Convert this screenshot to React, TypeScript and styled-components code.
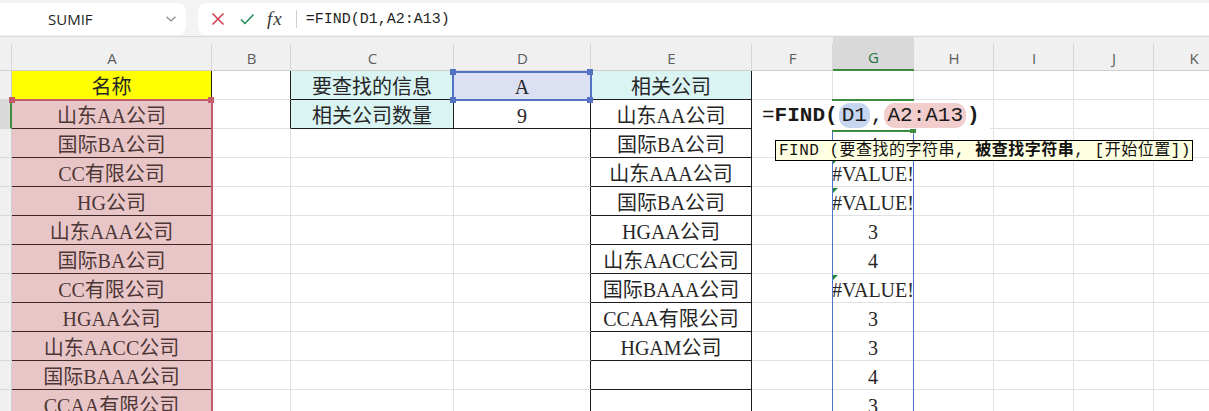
import React from "react";
import styled, { createGlobalStyle } from "styled-components";

const GlobalStyle = createGlobalStyle`
  html, body {
    margin: 0;
    background: #ffffff;
    overflow: hidden;
  }
`;

const COL_WIDTHS = [12, 200, 79, 163, 137, 161, 81, 81, 80, 80, 80, 80];
const LETTERS = ["", "A", "B", "C", "D", "E", "F", "G", "H", "I", "J", "K"];
const ROW_H = 29;
const HEAD_H = 34;

const colA = [
  "名称",
  "山东AA公司",
  "国际BA公司",
  "CC有限公司",
  "HG公司",
  "山东AAA公司",
  "国际BA公司",
  "CC有限公司",
  "HGAA公司",
  "山东AACC公司",
  "国际BAAA公司",
  "CCAA有限公司",
];
const colC = ["要查找的信息", "相关公司数量"];
const colD = ["A", "9"];
const colE = [
  "相关公司",
  "山东AA公司",
  "国际BA公司",
  "山东AAA公司",
  "国际BA公司",
  "HGAA公司",
  "山东AACC公司",
  "国际BAAA公司",
  "CCAA有限公司",
  "HGAM公司",
  "",
  "",
];
const colG = ["", "", "4", "#VALUE!", "#VALUE!", "3", "4", "#VALUE!", "3", "3", "4", "3"];

const GRID = "#e1e1e1";
const BLACK = "#1c1c1c";
const TINT_LINE = "#3e2626";
const GREEN = "#3d8b3d";

const isBoxed = (r: number, c: number) =>
  c === 1 || c === 5 || ((c === 3 || c === 4) && r <= 2);

const cellText = (r: number, c: number) => {
  if (c === 1) return colA[r - 1] ?? "";
  if (c === 3) return colC[r - 1] ?? "";
  if (c === 4) return colD[r - 1] ?? "";
  if (c === 5) return colE[r - 1] ?? "";
  if (c === 7) return colG[r - 1] ?? "";
  return "";
};

const cellBg = (r: number, c: number) => {
  if (c === 1) return r === 1 ? "#ffff00" : "#e8c6c7";
  if ((c === 3 && r <= 2) || (c === 5 && r === 1)) return "#daf3f3";
  if (c === 4 && r === 1) return "#dbe0f3";
  return "#ffffff";
};

const Page = styled.div`
  width: 1209px;
  height: 411px;
  overflow: hidden;
  font-family: "Liberation Serif", "Noto Sans CJK SC", serif;
`;

const TopBar = styled.div`
  height: 37px;
  box-sizing: border-box;
  background: #f3f3f3;
  border-bottom: 1px solid #d9d9d9;
  display: flex;
  align-items: flex-start;
  padding-top: 3px;
  gap: 12px;
`;

const NameBox = styled.div`
  margin-left: -10px;
  width: 196px;
  height: 32px;
  box-sizing: border-box;
  background: #ffffff;
  border-radius: 8px;
  display: flex;
  align-items: center;
  padding: 0 9px 0 58px;
  font-family: "Open Sans", "Noto Sans", sans-serif;
  font-size: 15px;
  color: #1f1f1f;
`;

const NameText = styled.span`
  flex: 1;
`;

const FormulaBox = styled.div`
  flex: 1;
  margin-right: -12px;
  height: 32px;
  box-sizing: border-box;
  background: #ffffff;
  border-radius: 8px;
  display: flex;
  align-items: center;
  padding-left: 13px;
`;

const IconSlot = styled.span`
  display: inline-flex;
  width: 14px;
  height: 14px;
  margin-right: 15px;
`;

const Fx = styled.span`
  font-family: "Liberation Serif", serif;
  font-style: italic;
  font-size: 19px;
  color: #3a3a3a;
  letter-spacing: 1px;
  margin-left: -2px;
`;

const Divider = styled.span`
  width: 1px;
  height: 18px;
  background: #d0d0d0;
  margin: 0 9px 0 13px;
`;

const FormulaText = styled.span`
  font-family: "Liberation Mono", monospace;
  font-size: 15px;
  color: #1f1f1f;
`;

const Sheet = styled.div`
  position: relative;
  width: 1234px;
  display: grid;
  grid-template-columns: ${COL_WIDTHS.map((w) => `${w}px`).join(" ")};
  grid-auto-rows: ${ROW_H}px;
  grid-template-rows: ${HEAD_H}px;
`;

const HeadCell = styled.div<{ $active?: boolean }>`
  position: relative;
  box-sizing: border-box;
  background: ${(p) => (p.$active ? "#d9d9d9" : "#f0f0f0")};
  border-bottom: ${(p) => (p.$active ? `2px solid ${GREEN}` : "1px solid #cfcfcf")};
  display: flex;
  align-items: center;
  justify-content: center;
  padding-top: 8px;
  font-family: "Open Sans", "Noto Sans", sans-serif;
  font-size: 15px;
  color: ${(p) => (p.$active ? "#1f7340" : "#5c5c5c")};

  &::after {
    content: "";
    position: absolute;
    right: 0;
    top: 7px;
    bottom: 0;
    width: 1px;
    background: #d6d6d6;
  }
`;

const RowHead = styled.div<{ $active?: boolean }>`
  box-sizing: border-box;
  background: ${(p) => (p.$active ? "#d9d9d9" : "#f0f0f0")};
  border-bottom: 1px solid #d9d9d9;
  border-right: ${(p) => (p.$active ? `2px solid ${GREEN}` : "1px solid #cfcfcf")};
`;

const Cell = styled.div<{ $bg: string; $right: string; $bottom: string; $color: string }>`
  box-sizing: border-box;
  background: ${(p) => p.$bg};
  border-right: 1px solid ${(p) => p.$right};
  border-bottom: 1px solid ${(p) => p.$bottom};
  color: ${(p) => p.$color};
  display: flex;
  align-items: center;
  justify-content: center;
  padding-top: 3px;
  overflow: hidden;
  white-space: nowrap;
  font-size: 20px;
  line-height: 1;
`;

const RefBox = styled.div<{ $x: number; $y: number; $w: number; $h: number }>`
  position: absolute;
  left: ${(p) => p.$x}px;
  top: ${(p) => p.$y}px;
  width: ${(p) => p.$w}px;
  height: ${(p) => p.$h}px;
  box-sizing: border-box;
  pointer-events: none;
`;

const D1Box = styled(RefBox)`
  border: 2px solid #5472c4;
`;

const RangeBox = styled(RefBox)`
  border-top: 2px solid #c25b6b;
  border-right: 2px solid #c25b6b;
`;

const ActiveBox = styled(RefBox)`
  border-top: 2px solid ${GREEN};
  border-bottom: 2px solid ${GREEN};
`;

const SpillBox = styled(RefBox)`
  border-left: 1px solid #4f73cc;
  border-right: 1px solid #4f73cc;
`;

const Handle = styled.div<{ $x: number; $y: number; $c: string }>`
  position: absolute;
  left: ${(p) => p.$x - 3}px;
  top: ${(p) => p.$y - 3}px;
  width: 6px;
  height: 6px;
  background: ${(p) => p.$c};
`;

const ErrorMark = styled.div<{ $y: number }>`
  position: absolute;
  left: 833px;
  top: ${(p) => p.$y}px;
  width: 0;
  height: 0;
  border-top: 5px solid #1e8a3c;
  border-right: 5px solid transparent;
`;

const Editor = styled.div`
  position: absolute;
  left: 752px;
  top: 64px;
  width: 238px;
  height: 28px;
  background: #ffffff;
  display: flex;
  align-items: center;
  padding-left: 10px;
  box-sizing: border-box;
  font-family: "Liberation Mono", monospace;
  font-size: 21px;
  color: #1a1a1a;
  white-space: pre;
`;

const Strong = styled.span`
  font-weight: bold;
`;

const RefChip = styled.span<{ $bg: string }>`
  background: ${(p) => p.$bg};
  border-radius: 11px;
  padding: 1px 3px;
  margin: 0 1px;
`;

const Tooltip = styled.div`
  position: absolute;
  left: 775px;
  top: 103px;
  width: 418px;
  height: 21px;
  box-sizing: border-box;
  background: #ffffe1;
  border: 1px solid #000000;
  display: flex;
  align-items: center;
  padding-left: 3px;
  font-family: "Liberation Mono", "Noto Sans CJK SC", monospace;
  font-size: 16px;
  letter-spacing: 0.5px;
  line-height: 1;
  color: #111111;
  white-space: pre;
  overflow: hidden;
`;

const rowTop = (r: number) => HEAD_H + (r - 1) * ROW_H;

export default function App() {
  const rows = Array.from({ length: 12 }, (_, i) => i + 1);

  return (
    <Page>
      <GlobalStyle />
      <TopBar>
        <NameBox>
          <NameText>SUMIF</NameText>
          <svg width="12" height="8" viewBox="0 0 12 8">
            <path d="M1.5 1.8 L6 6 L10.5 1.8" fill="none" stroke="#8a8a8a" strokeWidth="1.2" />
          </svg>
        </NameBox>
        <FormulaBox>
          <IconSlot>
            <svg width="14" height="14" viewBox="0 0 14 14">
              <path d="M1.5 1.5 L12.5 12.5 M12.5 1.5 L1.5 12.5" stroke="#d13c4b" strokeWidth="1.5" />
            </svg>
          </IconSlot>
          <IconSlot>
            <svg width="14" height="14" viewBox="0 0 14 14">
              <path d="M1 7.5 L5 11.5 L13.5 2.5" fill="none" stroke="#1b8a57" strokeWidth="1.5" />
            </svg>
          </IconSlot>
          <Fx>fx</Fx>
          <Divider />
          <FormulaText>=FIND(D1,A2:A13)</FormulaText>
        </FormulaBox>
      </TopBar>

      <Sheet>
        {LETTERS.map((l, c) => (
          <HeadCell key={`h${c}`} $active={l === "G"}>
            {l}
          </HeadCell>
        ))}
        {rows.map((r) =>
          COL_WIDTHS.map((_, c) => {
            if (c === 0) return <RowHead key={`${r}-0`} $active={r === 2} />;
            const tinted = c === 1 && r > 1;
            const right =
              isBoxed(r, c) || isBoxed(r, c + 1) ? (tinted ? TINT_LINE : BLACK) : GRID;
            const bottom =
              isBoxed(r, c) || isBoxed(r + 1, c) ? (tinted ? TINT_LINE : BLACK) : GRID;
            return (
              <Cell
                key={`${r}-${c}`}
                $bg={cellBg(r, c)}
                $right={right}
                $bottom={bottom}
                $color={tinted ? "#4d3636" : "#262626"}
              >
                {cellText(r, c)}
              </Cell>
            );
          })
        )}

        <RangeBox $x={11} $y={62} $w={202} $h={400} />
        <Handle $x={12} $y={63} $c="#c25b6b" />
        <Handle $x={211} $y={63} $c="#c25b6b" />

        <D1Box $x={452} $y={34} $w={140} $h={30} />
        <Handle $x={453} $y={35} $c="#5472c4" />
        <Handle $x={590} $y={35} $c="#5472c4" />
        <Handle $x={453} $y={63} $c="#5472c4" />
        <Handle $x={590} $y={63} $c="#5472c4" />

        <SpillBox $x={832} $y={94} $w={82} $h={400} />
        <ActiveBox $x={832} $y={62} $w={82} $h={33} />
        <Handle $x={913} $y={93} $c={GREEN} />

        {[4, 5, 8].map((r) => (
          <ErrorMark key={r} $y={rowTop(r) + 1} />
        ))}

        <Editor>
          =<Strong>FIND(</Strong>
          <RefChip $bg="#c6d6f1">D1</RefChip>,
          <RefChip $bg="#f1cdcd">A2:A13</RefChip>
          <Strong>)</Strong>
        </Editor>

        <Tooltip>
          {"FIND (要查找的字符串, "}
          <Strong>被查找字符串</Strong>
          {", [开始位置])"}
        </Tooltip>
      </Sheet>
    </Page>
  );
}
